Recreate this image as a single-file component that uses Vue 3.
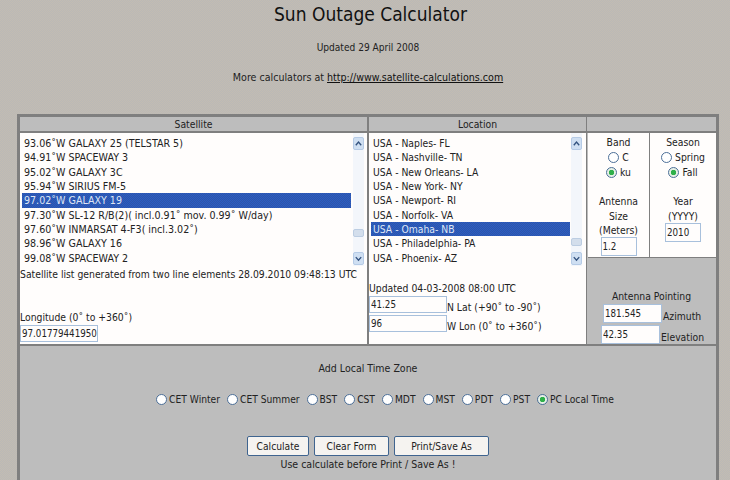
<template>
  <div class="page">
    <h1 class="title">Sun Outage Calculator</h1>
    <p class="updated">Updated 29 April 2008</p>
    <p class="more">More calculators at <a href="#">http://www.satellite-calculations.com</a></p>

    <div class="calc">
      <div class="grid">
        <div class="head">Satellite</div>
        <div class="head head-loc">Location</div>
        <div class="head last"></div>

        <div class="cell sat">
          <div class="list">
            <ul>
              <li v-for="s in satellites" :key="s" :class="{ sel: s === selectedSat }">{{ s }}</li>
            </ul>
            <div class="scroll">
              <span class="arrow"><svg viewBox="0 0 10 10"><path d="M2 7l3-3.5L8 7" /></svg></span>
              <span class="thumb sat-thumb"></span>
              <span class="arrow down"><svg viewBox="0 0 10 10"><path d="M2 3.5L5 7l3-3.5" /></svg></span>
            </div>
          </div>
          <p class="note">Satellite list generated from two line elements 28.09.2010 09:48:13 UTC</p>
          <label class="lon-label">Longitude (0˚ to +360˚)</label>
          <input class="field lon" value="97.01779441950" />
        </div>

        <div class="cell loc">
          <div class="list">
            <ul>
              <li v-for="l in locations" :key="l" :class="{ sel: l === selectedLoc }">{{ l }}</li>
            </ul>
            <div class="scroll">
              <span class="arrow"><svg viewBox="0 0 10 10"><path d="M2 7l3-3.5L8 7" /></svg></span>
              <span class="thumb loc-thumb"></span>
              <span class="arrow down"><svg viewBox="0 0 10 10"><path d="M2 3.5L5 7l3-3.5" /></svg></span>
            </div>
          </div>
          <p class="loc-updated">Updated 04-03-2008 08:00 UTC</p>
          <div class="coord"><input class="field" value="41.25" /><span>N Lat (+90˚ to -90˚)</span></div>
          <div class="coord"><input class="field" value="96" /><span>W Lon (0˚ to +360˚)</span></div>
        </div>

        <div class="side">
          <div class="opts">
            <div class="opt">
              <div>Band</div>
              <label class="radio-row"><span class="radio"></span>C</label>
              <label class="radio-row"><span class="radio on"></span>ku</label>
              <div class="opt-label">Antenna<br />Size<br />(Meters)</div>
              <input class="field small" value="1.2" />
            </div>
            <div class="opt">
              <div>Season</div>
              <label class="radio-row"><span class="radio"></span>Spring</label>
              <label class="radio-row"><span class="radio on"></span>Fall</label>
              <div class="opt-label">Year<br />(YYYY)</div>
              <input class="field small" value="2010" />
            </div>
          </div>
          <div class="pointing">
            <div class="point-title">Antenna Pointing</div>
            <div class="point-row"><input class="field" value="181.545" /><span>Azimuth</span></div>
            <div class="point-row second"><input class="field" value="42.35" /><span>Elevation</span></div>
          </div>
        </div>
      </div>

      <div class="bottom">
        <div class="tz-title">Add Local Time Zone</div>
        <div class="zones">
          <label v-for="z in zones" :key="z" class="zone">
            <span class="radio" :class="{ on: z === 'PC Local Time' }"></span>{{ z }}
          </label>
        </div>
        <div class="buttons">
          <button>Calculate</button>
          <button>Clear Form</button>
          <button class="print">Print/Save As</button>
        </div>
        <div class="hint">Use calculate before Print / Save As !</div>
      </div>
    </div>
  </div>
</template>

<script setup>
const satellites = [
  '93.06˚W GALAXY 25 (TELSTAR 5)',
  '94.91˚W SPACEWAY 3',
  '95.02˚W GALAXY 3C',
  '95.94˚W SIRIUS FM-5',
  '97.02˚W GALAXY 19',
  '97.30˚W SL-12 R/B(2)( incl.0.91˚ mov. 0.99˚ W/day)',
  '97.60˚W INMARSAT 4-F3( incl.3.02˚)',
  '98.96˚W GALAXY 16',
  '99.08˚W SPACEWAY 2'
]
const selectedSat = '97.02˚W GALAXY 19'

const locations = [
  'USA - Naples- FL',
  'USA - Nashville- TN',
  'USA - New Orleans- LA',
  'USA - New York- NY',
  'USA - Newport- RI',
  'USA - Norfolk- VA',
  'USA - Omaha- NB',
  'USA - Philadelphia- PA',
  'USA - Phoenix- AZ'
]
const selectedLoc = 'USA - Omaha- NB'

const zones = ['CET Winter', 'CET Summer', 'BST', 'CST', 'MDT', 'MST', 'PDT', 'PST', 'PC Local Time']
</script>

<style>
html, body {
  margin: 0;
  overflow: hidden;
}
</style>

<style scoped>
.page {
  width: 730px;
  height: 480px;
  overflow: hidden;
  box-sizing: border-box;
  padding: 2px 0 0 6px;
  background: repeating-conic-gradient(#bab9b7 0 25%, #c3bcb2 0 50%) 0 0 / 2px 2px;
  font-family: "DejaVu Sans", sans-serif;
  font-stretch: condensed;
  font-size: 10.3px;
  color: #222;
  text-align: center;
}

.title {
  margin: 0;
  padding-left: 5px;
  font-size: 19px;
  font-weight: normal;
  line-height: 24px;
  color: #111;
}

.updated {
  margin: 15px 0 0;
  font-size: 10.1px;
  line-height: 13px;
}

.more {
  margin: 17px 0 0;
  font-size: 10.6px;
  line-height: 13px;
}

.more a {
  color: #111;
}

.calc {
  width: 702px;
  margin: 30px 0 0 11px;
  box-sizing: border-box;
  border: 3px solid #7f7f7f;
  border-bottom: 0;
  background: #bdbdbd;
}

.grid {
  display: grid;
  grid-template-columns: 348px 219px 129px;
  grid-template-rows: 16px 211px;
  border-bottom: 2px solid #7f7f7f;
}

.head {
  background: #bdbdbd;
  line-height: 15px;
  border-bottom: 2px solid #7f7f7f;
  border-right: 1px solid #7f7f7f;
}

.head-loc {
  border-left: 1px solid #7f7f7f;
}

.head.last {
  border-right: 0;
}

.cell {
  background: #fffdfc;
  border-right: 1px solid #7f7f7f;
  text-align: left;
  min-width: 0;
}

.loc {
  border-left: 1px solid #7f7f7f;
}

.list {
  display: flex;
  height: 133px;
}

.list ul {
  flex: 1;
  margin: 0;
  padding: 3px 1px 0 2px;
  list-style: none;
  line-height: 14.33px;
  white-space: nowrap;
  min-width: 0;
}

.sat .list ul {
  font-size: 10.6px;
}

.list li {
  padding-left: 2px;
}

.list li.sel {
  background: repeating-conic-gradient(#2a5cc4 0 25%, #2e55a8 0 50%) 0 0 / 2px 2px;
  color: #dfe6f5;
}

.scroll {
  width: 11px;
  margin: 0 3px 0 1px;
  padding-top: 4px;
  box-sizing: border-box;
  display: flex;
  flex-direction: column;
  background: #f3f6fb;
}

.loc .scroll {
  margin: 0 4px 0 0;
}

.arrow {
  display: block;
  flex: none;
  width: 11px;
  height: 13px;
  background: #cfdff2;
  border: 1px solid #b6cbe6;
  box-sizing: border-box;
  border-radius: 2px;
}

.arrow svg {
  display: block;
  width: 9px;
  height: 11px;
}

.arrow path {
  fill: none;
  stroke: #33527f;
  stroke-width: 1.5;
}

.arrow.down {
  margin-top: auto;
  margin-bottom: 1px;
}

.thumb {
  display: block;
  width: 11px;
  height: 8px;
  background: #d3deec;
  border: 1px solid #bccde2;
  box-sizing: border-box;
  border-radius: 2px;
}

.sat-thumb {
  margin-top: 79px;
}

.loc-thumb {
  margin-top: 88px;
}

.note {
  margin: 2px 0 0;
  line-height: 13px;
  white-space: nowrap;
}

.lon-label {
  display: block;
  margin-top: 30px;
  line-height: 13px;
}

.field {
  box-sizing: border-box;
  display: block;
  height: 17px;
  margin: 0;
  padding: 0 0 0 1px;
  border: 1px solid #a8c0dc;
  background: #fffdfc;
  font-family: inherit;
  font-stretch: condensed;
  font-size: 9.7px;
  color: #222;
  outline: none;
}

.lon {
  width: 78px;
  margin-top: 1px;
}

.loc-updated {
  margin: 16px 0 0;
  line-height: 13px;
  white-space: nowrap;
}

.coord {
  display: flex;
  align-items: center;
  height: 19px;
  white-space: nowrap;
}

.coord .field {
  width: 78px;
}

.coord span {
  margin-top: 4px;
}

.side {
  display: flex;
  flex-direction: column;
  min-width: 0;
}

.opts {
  display: grid;
  grid-template-columns: 61px 66px;
  column-gap: 1px;
  height: 125px;
  margin-left: 1px;
  background: #7f7f7f;
  border-bottom: 1px solid #7f7f7f;
  box-sizing: border-box;
  width: 128px;
}

.opt {
  background: #fffdfc;
  padding-top: 2px;
  line-height: 14.33px;
}

.radio-row {
  display: flex;
  justify-content: center;
  align-items: center;
  height: 15.5px;
  gap: 3px;
}

.radio {
  display: inline-block;
  box-sizing: border-box;
  flex: none;
  width: 11px;
  height: 11px;
  border: 1px solid #4c6f98;
  border-radius: 50%;
  background: #fff;
}

.radio.on {
  background: radial-gradient(circle, #2fb04a 0 2.5px, #e6f0e6 3px);
}

.opt-label {
  margin-top: 14px;
}

.small {
  width: 36px;
  height: 19px;
  margin: 0 auto;
}

.pointing {
  flex: 1;
  background: #bdbdbd;
  padding-top: 32px;
}

.point-title {
  line-height: 13px;
}

.point-row {
  display: flex;
  align-items: center;
  gap: 1px;
  height: 19px;
  padding-left: 16px;
  margin-top: 1px;
  white-space: nowrap;
}

.point-row.second {
  padding-left: 14px;
  margin-top: 2px;
}

.point-row .field {
  width: 59px;
  height: 19px;
}

.point-row span {
  margin-top: 4px;
}

.bottom {
  height: 134px;
  background: #bdbdbd;
  padding-top: 16px;
  box-sizing: border-box;
  font-size: 10.5px;
}

.tz-title {
  line-height: 13px;
}

.zones {
  display: flex;
  justify-content: center;
  margin-top: 18px;
  padding-left: 34px;
  gap: 7px;
  font-size: 10.2px;
  line-height: 13px;
}

.zone {
  display: flex;
  align-items: center;
  gap: 2px;
  white-space: nowrap;
}

.buttons {
  display: flex;
  justify-content: center;
  gap: 5px;
  margin-top: 30px;
}

.buttons button {
  height: 20px;
  width: 62px;
  padding: 0;
  border: 1px solid #3f648f;
  border-radius: 2px;
  background: #f5f3f0;
  font-family: inherit;
  font-stretch: condensed;
  font-size: 10.2px;
  color: #222;
}

.buttons button:nth-child(2) {
  width: 75px;
}

.buttons .print {
  width: 95px;
}

.hint {
  margin-top: 2px;
  line-height: 13px;
}
</style>
